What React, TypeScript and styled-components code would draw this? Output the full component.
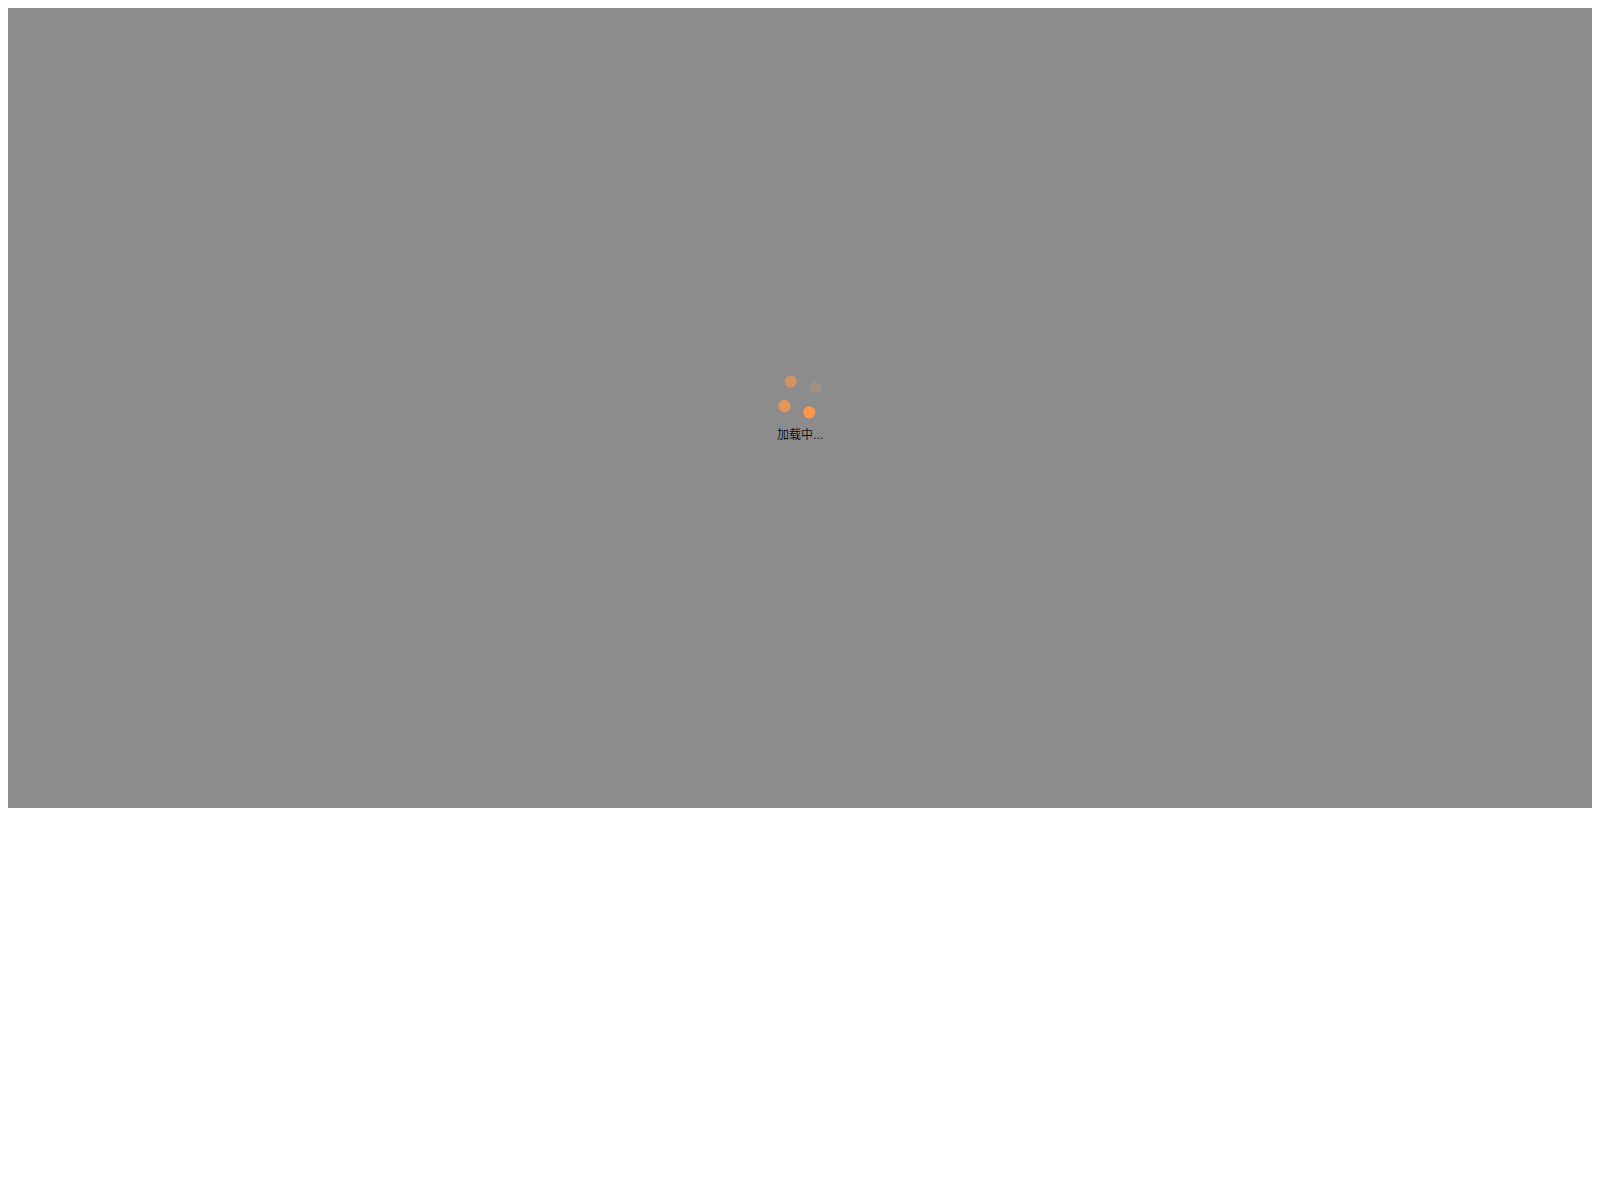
import React from "react";
import styled, { createGlobalStyle } from "styled-components";

const GlobalStyle = createGlobalStyle`
  body {
    margin: 8px;
    background: #fff;
    font-family: "Liberation Sans", "Noto Sans CJK SC", sans-serif;
  }
`;

const Overlay = styled.main`
  display: flex;
  align-items: center;
  justify-content: center;
  height: 800px;
  background: #8c8c8c;
`;

const Loading = styled.div`
  display: flex;
  flex-direction: column;
  align-items: center;
  gap: 6px;
`;

const Spinner = styled.svg`
  display: block;
  width: 48px;
  height: 48px;
  fill: #ff964b;
`;

const Label = styled.span`
  font-size: 12px;
  line-height: 16px;
  color: #111;
`;

export default function App() {
  return (
    <>
      <GlobalStyle />
      <Overlay>
        <Loading role="status">
          <Spinner viewBox="0 0 48 48" aria-hidden="true">
            <g transform="rotate(14 24 24)">
              <circle cx="11.2" cy="11.3" r="6.1" opacity="0.6" />
              <circle cx="36.7" cy="11.3" r="6.1" opacity="0.2" />
              <circle cx="11.2" cy="36.7" r="6.1" opacity="0.8" />
              <circle cx="36.7" cy="36.7" r="6.1" />
            </g>
          </Spinner>
          <Label>加载中...</Label>
        </Loading>
      </Overlay>
    </>
  );
}
